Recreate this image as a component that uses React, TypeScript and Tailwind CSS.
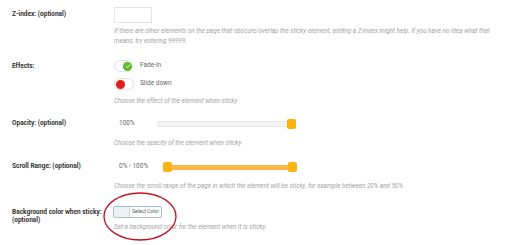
import React from "react";

const Help = ({ children, className = "" }: { children: React.ReactNode; className?: string }) => (
  <div className={`text-[6.35px] leading-[10px] italic text-[#a3a3a3] ${className}`}>{children}</div>
);

const Label = ({ children, className = "" }: { children: React.ReactNode; className?: string }) => (
  <div className={`w-[102px] shrink-0 text-[6.5px] font-bold text-[#333] ${className}`}>{children}</div>
);

const Toggle = ({ on }: { on: boolean }) => (
  <div className="relative w-[20px] h-[12px] rounded-full bg-white border border-[#e6e6e6] shadow-[0_0_1px_rgba(0,0,0,0.08)]">
    {on ? (
      <div className="absolute right-[1px] top-[0.5px] w-[9px] h-[9px] rounded-full bg-[#5fb92a] flex items-center justify-center">
        <svg width="6" height="6" viewBox="0 0 10 10">
          <path d="M2 5.2 L4.2 7.3 L8 3" fill="none" stroke="white" strokeWidth="1.6" strokeLinecap="round" strokeLinejoin="round" />
        </svg>
      </div>
    ) : (
      <div className="absolute left-[1px] top-[0.5px] w-[9px] h-[9px] rounded-full bg-[#e11d1d]" />
    )}
  </div>
);

export default function App() {
  return (
    <div className="relative w-[512px] h-[245px] bg-white overflow-hidden pl-[12px] pt-[7px] font-['Roboto','Liberation_Sans',sans-serif]">
      {/* Z-index */}
      <div className="flex items-center h-[16px]">
        <Label>Z-index: (optional)</Label>
        <div className="w-[38px] h-[16px] border border-[#e6e6e6] bg-white" />
      </div>
      <Help className="ml-[102px] mt-[3px] whitespace-nowrap">
        If there are other elements on the page that obscure/overlap the sticky element, adding a Z-index might help. If you have no idea what that
        <br />
        means, try entering 99999.
      </Help>

      {/* Effects */}
      <div className="flex mt-[14px]">
        <Label className="leading-[12px]">Effects:</Label>
        <div className="flex flex-col gap-[6px]">
          <div className="flex items-center h-[12px]">
            <Toggle on />
            <span className="ml-[6px] text-[6.5px] text-[#666]">Fade-in</span>
          </div>
          <div className="flex items-center h-[12px]">
            <Toggle on={false} />
            <span className="ml-[6px] text-[6.5px] text-[#666]">Slide down</span>
          </div>
        </div>
      </div>
      <Help className="ml-[102px] mt-[6px]">Choose the effect of the element when sticky</Help>

      {/* Opacity */}
      <div className="flex items-center h-[12px] mt-[12px]">
        <Label>Opacity: (optional)</Label>
        <div className="w-[43px] pl-[5px] text-[6.5px] text-[#666]">100%</div>
        <div className="relative w-[136px] h-[6px] rounded-[2px] bg-[#f4f4f4] border border-[#e8e8e8]">
          <div className="absolute right-[-4px] top-[-3px] w-[9px] h-[10px] rounded-[2px] bg-[#fbb30f]" />
        </div>
      </div>
      <Help className="ml-[102px] mt-[8px]">Choose the opacity of the element when sticky</Help>

      {/* Scroll Range */}
      <div className="flex items-center h-[12px] mt-[13px]">
        <Label>Scroll Range: (optional)</Label>
        <div className="w-[49px] pl-[5px] text-[6.5px] text-[#666]">0% - 100%</div>
        <div className="relative w-[134px] h-[5px] rounded-[2px] bg-[#f6b94a]">
          <div className="absolute left-0 top-[-2.5px] w-[9px] h-[10px] rounded-[2px] bg-[#fbb30f]" />
          <div className="absolute right-0 top-[-2.5px] w-[9px] h-[10px] rounded-[2px] bg-[#fbb30f]" />
        </div>
      </div>
      <Help className="ml-[102px] mt-[8px]">
        Choose the scroll range of the page in which the element will be sticky, for example between 20% and 50%
      </Help>

      {/* Background color */}
      <div className="flex items-start mt-[15px]">
        <Label className="leading-[8px] mt-[1.5px]">
          Background color when sticky:
          <br />
          (optional)
        </Label>
        <div className="flex flex-col -ml-[1px]">
          <div className="flex w-[49px] h-[12px] rounded-[2px] border border-[#a3c0d0] bg-white overflow-hidden">
            <div className="w-[16px] h-full bg-[#eef1f4] border-r border-[#cdd8df]" />
            <div className="flex-1 flex items-center justify-center text-[5px] text-[#555]">Select Color</div>
          </div>
          <Help className="mt-[4px] ml-[1px]">Set a background color for the element when it is sticky.</Help>
        </div>
      </div>

      {/* Annotation ellipse */}
      <svg className="absolute left-[100px] top-[190px]" width="82" height="54" viewBox="0 0 82 54">
        <ellipse cx="40" cy="26.5" rx="36" ry="23.5" fill="none" stroke="#c4141f" strokeWidth="1.3" />
      </svg>
    </div>
  );
}
